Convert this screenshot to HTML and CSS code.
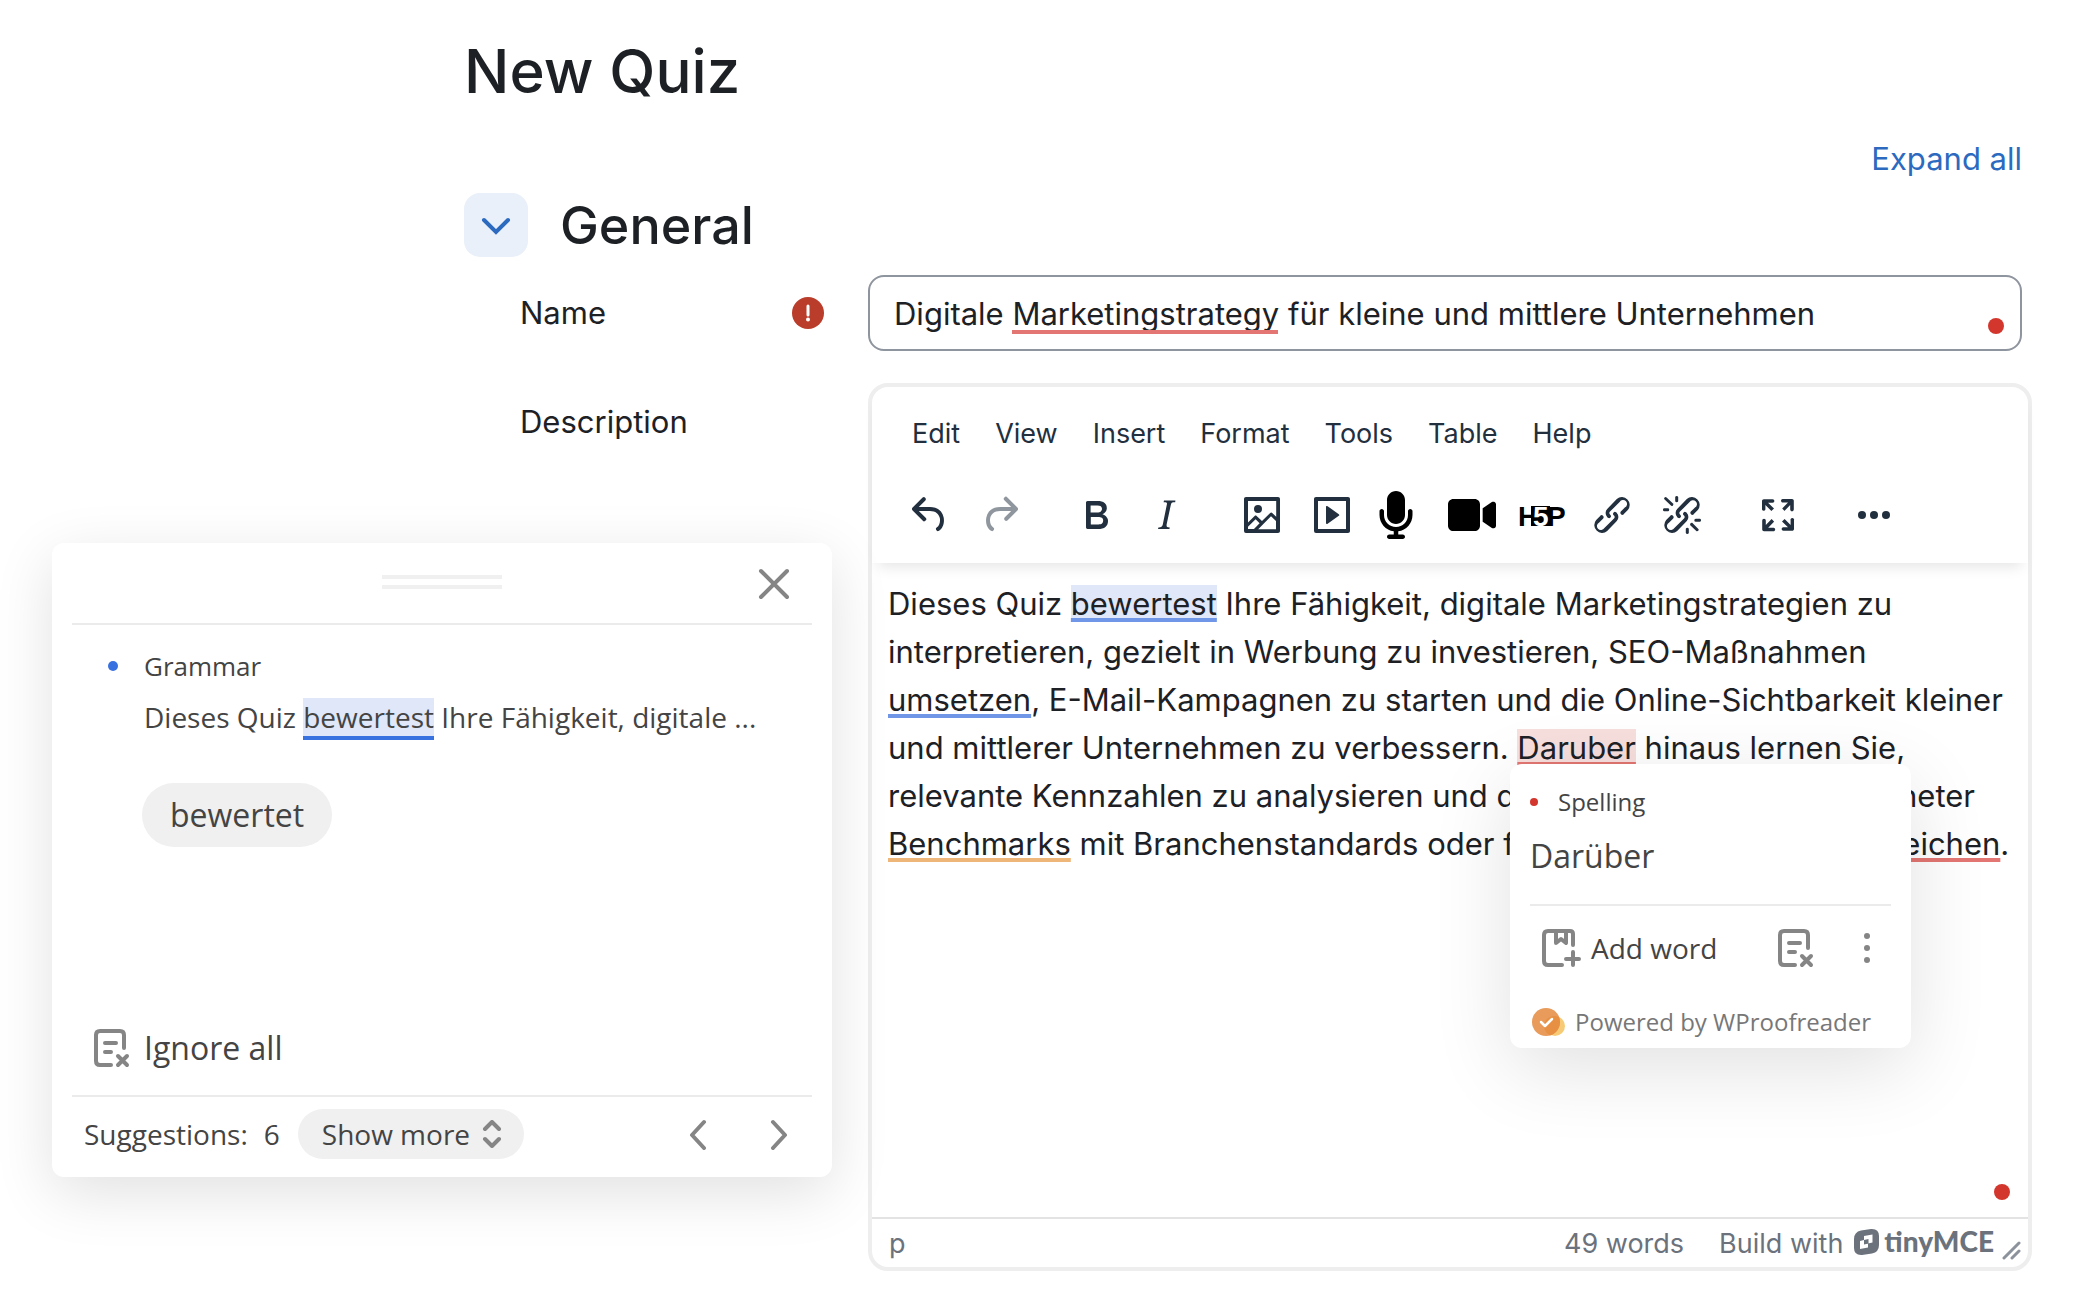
FILE: index.html
```html
<!DOCTYPE html>
<html lang="en">
<head>
	<meta charset="utf-8">
	<title>New Quiz</title>
	<link rel="stylesheet" href="styles.css">
</head>
<body>

<main class="quiz-form">
	<h1>New Quiz</h1>
	<div class="form-links"><a href="#">Expand all</a></div>
	<div class="section-head">
		<button class="toggle" aria-label="Collapse General">
			<svg width="32" height="32" viewBox="0 0 32 32"><path d="M4 11l12 12 12-12" /></svg>
		</button>
		<h2>General</h2>
	</div>

	<div class="form-row">
		<div class="form-label">
			<label for="quiz-name">Name</label>
			<svg width="32" height="32" viewBox="0 0 32 32"><circle cx="16" cy="16" r="16" fill="#ba3d2c" /><path d="M16 9v9" stroke="#fff" stroke-width="3" stroke-linecap="round" /><circle cx="16" cy="22.500" r="2" fill="#fff" /></svg>
		</div>
		<div class="name-field">
			<input id="quiz-name" type="text" spellcheck="false" value="Digitale Marketingstrategy für kleine und mittlere Unternehmen">
			<span class="name-mark"></span>
			<span class="badge"></span>
		</div>
	</div>

	<div class="form-row">
		<div class="form-label description-label">
			<label id="description-label">Description</label>
		</div>
		<div class="editor">
			<div class="editor-header">
				<div class="menubar">
					<button>Edit</button>
					<button>View</button>
					<button>Insert</button>
					<button>Format</button>
					<button>Tools</button>
					<button>Table</button>
					<button>Help</button>
				</div>
				<div class="toolbar">
					<div class="group">
						<button aria-label="Undo"><svg viewBox="0 0 24 24"><path d="M6.400 8H12c3.700 0 6.200 2 6.800 5.100.6 2.700-.4 5.600-2.300 6.800a1 1 0 0 1-1-1.800c1.100-.6 1.800-2.700 1.400-4.600-.5-2.100-2.100-3.500-4.900-3.500H6.400l3.300 3.300a1 1 0 1 1-1.400 1.400l-5-5a1 1 0 0 1 0-1.400l5-5a1 1 0 0 1 1.400 1.400L6.400 8Z" /></svg></button>
						<button aria-label="Redo" disabled><svg viewBox="0 0 24 24"><path d="M17.600 10H12c-2.800 0-4.400 1.400-4.900 3.500-.4 2 .3 4 1.400 4.600a1 1 0 1 1-1 1.800c-2-1.200-2.900-4.100-2.300-6.800.6-3 3-5.100 6.800-5.100h5.600l-3.300-3.300a1 1 0 1 1 1.400-1.400l5 5a1 1 0 0 1 0 1.400l-5 5a1 1 0 0 1-1.400-1.400l3.300-3.300Z" /></svg></button>
					</div>
					<div class="group">
						<button aria-label="Bold"><svg viewBox="0 0 24 24"><path fill-rule="evenodd" d="M7.800 19c-.3 0-.5 0-.6-.2l-.2-.5V5.700c0-.2 0-.4.2-.5l.6-.2h5c1.500 0 2.700.3 3.500 1 .7.6 1.100 1.400 1.100 2.500a3 3 0 0 1-.6 1.900c-.4.6-1 1-1.600 1.200.4.1.9.3 1.300.6s.8.7 1 1.200c.4.4.5 1 .5 1.600 0 1.300-.4 2.300-1.300 3-.8.7-2.100 1-3.800 1H7.800Zm5-8.300c.6 0 1.200-.1 1.600-.5.4-.3.6-.7.6-1.300 0-1.100-.8-1.700-2.300-1.700H9.300v3.500h3.400Zm.5 6c.7 0 1.300-.1 1.700-.4.4-.4.6-.9.6-1.500s-.2-1-.7-1.400c-.4-.3-1-.4-2-.4H9.400v3.800h4Z" /></svg></button>
						<button aria-label="Italic"><svg viewBox="0 0 24 24"><path d="m16.700 4.700-.1.900h-.3c-.6 0-1 0-1.400.3-.3.3-.4.6-.5 1.100l-2.100 9.800v.6c0 .5.4.8 1.400.8h.2l-.2.8H8l.2-.8h.2c1.100 0 1.800-.5 2-1.500l2-9.800.1-.5c0-.6-.4-.8-1.400-.8h-.3l.2-.9h5.800Z" /></svg></button>
					</div>
					<div class="group">
						<button aria-label="Image"><svg viewBox="0 0 24 24"><path fill-rule="evenodd" d="m5 15.700 3.300-3.200c.3-.3.7-.3 1 0L12 15l4.100-4c.3-.4.8-.4 1 0l2 1.900V5H5v10.700ZM5 18V19h3l2.800-2.900-2-2L5 17.900Zm14-3-2.500-2.400-6.400 6.500H19v-4ZM4 3h16c.6 0 1 .4 1 1v16c0 .6-.4 1-1 1H4a1 1 0 0 1-1-1V4c0-.6.4-1 1-1Zm6 8a2 2 0 1 0 0-4 2 2 0 0 0 0 4Z" /></svg></button>
						<button aria-label="Multimedia"><svg viewBox="0 0 24 24"><path fill-rule="evenodd" d="M4 3h16c.6 0 1 .4 1 1v16c0 .6-.4 1-1 1H4a1 1 0 0 1-1-1V4c0-.6.4-1 1-1Zm1 2v14h14V5H5Zm4.800 2.600 5.600 4a.5.5 0 0 1 0 .8l-5.600 4A.5.5 0 0 1 9 16V8a.5.5 0 0 1 .8-.4Z" /></svg></button>
						<button aria-label="Record audio"><svg class="solid" viewBox="0 0 512 512"><path d="M192 0C139 0 96 43 96 96V256c0 53 43 96 96 96s96-43 96-96V96c0-53-43-96-96-96zM64 216c0-13.300-10.700-24-24-24s-24 10.700-24 24v40c0 89.100 66.200 162.700 152 174.400V464H120c-13.300 0-24 10.700-24 24s10.700 24 24 24h72 72c13.300 0 24-10.700 24-24s-10.700-24-24-24H216V430.400c85.800-11.700 152-85.300 152-174.400V216c0-13.300-10.700-24-24-24s-24 10.700-24 24v40c0 70.700-57.300 128-128 128s-128-57.300-128-128V216z" /></svg></button>
						<button aria-label="Record video"><svg class="solid" viewBox="0 0 576 512"><path d="M0 128C0 92.700 28.700 64 64 64H320c35.300 0 64 28.700 64 64V384c0 35.300-28.700 64-64 64H64c-35.300 0-64-28.700-64-64V128zM559.100 99.800c10.400 5.600 16.900 16.400 16.900 28.200V384c0 11.800-6.500 22.600-16.900 28.200s-23 5-32.900-1.600l-96-64L416 337.100V320 192 174.900l14.200-9.500 96-64c9.800-6.500 22.400-7.200 32.900-1.600z" /></svg></button>
						<button aria-label="Insert H5P"><svg class="solid h5p" viewBox="0 0 48 48"><path d="M13 15h19v20H13z" /><text y="35"><tspan x="0">H</tspan><tspan class="five" x="15">5</tspan><tspan x="29">P</tspan></text></svg></button>
						<button aria-label="Link"><svg viewBox="0 0 24 24"><path d="M6.200 12.300a1 1 0 0 1 1.400 1.400l-2 2a2 2 0 1 0 2.600 2.800l4.800-4.800a1 1 0 0 0 0-1.400 1 1 0 1 1 1.400-1.300 2.900 2.900 0 0 1 0 4L9.600 20a3.900 3.900 0 0 1-5.500-5.500l2-2Zm11.600-.6a1 1 0 0 1-1.400-1.400l2-2a2 2 0 1 0-2.600-2.800L11 10.300a1 1 0 0 0 0 1.400A1 1 0 1 1 9.600 13a2.900 2.900 0 0 1 0-4L14.400 4a3.900 3.900 0 0 1 5.500 5.500l-2 2Z" /></svg></button>
						<button aria-label="Unlink"><svg viewBox="0 0 24 24"><path d="M6.200 12.300a1 1 0 0 1 1.400 1.400l-2 2a2 2 0 1 0 2.600 2.800l4.800-4.800a1 1 0 0 0 0-1.400 1 1 0 1 1 1.400-1.300 2.900 2.900 0 0 1 0 4L9.600 20a3.900 3.900 0 0 1-5.500-5.500l2-2Zm11.600-.6a1 1 0 0 1-1.400-1.400l2.100-2a2 2 0 1 0-2.700-2.800L11 10.300a1 1 0 0 0 0 1.400A1 1 0 1 1 9.600 13a2.900 2.900 0 0 1 0-4L14.400 4a3.900 3.900 0 0 1 5.500 5.500l-2 2ZM7.600 6.300a.8.8 0 0 1-1 1.100L3.300 4.200a.7.7 0 1 1 1-1l3.200 3.100ZM5.100 8.600a.8.8 0 0 1 0 1.500H3a.8.8 0 0 1 0-1.500H5Zm5-3.500a.8.8 0 0 1-1.500 0V3a.8.8 0 0 1 1.500 0V5Zm6 11.800a.8.8 0 0 1 1-1l3.200 3.200a.8.8 0 0 1-1 1L16 17Zm-2.200 2a.8.8 0 0 1 1.500 0V21a.8.8 0 0 1-1.500 0V19Zm5-3.500a.7.7 0 1 1 0-1.500H21a.8.8 0 0 1 0 1.500H19Z" /></svg></button>
					</div>
					<div class="group">
						<button aria-label="Fullscreen"><svg viewBox="0 0 24 24"><path d="m15.300 10-1.200-1.300 2.900-3h-2.300a.9.9 0 1 1 0-1.700H19c.5 0 .9.4.9.9v4.400a.9.9 0 1 1-1.800 0V7l-2.900 3Zm0 4 3 3v-2.300a.9.9 0 1 1 1.700 0V19c0 .5-.4.9-.9.9h-4.400a.9.9 0 1 1 0-1.800H17l-3-2.900 1.300-1.200ZM10 15.400l-2.900 3h2.300a.9.9 0 1 1 0 1.700H5a.9.9 0 0 1-.9-.9v-4.400a.9.9 0 1 1 1.800 0V17l2.900-3 1.200 1.300ZM8.700 10 5.700 7v2.300a.9.9 0 0 1-1.700 0V5c0-.5.4-.9.9-.9h4.400a.9.9 0 0 1 0 1.800H7l3 2.900-1.300 1.200Z" /></svg></button>
					</div>
					<div class="group">
						<button aria-label="More"><svg viewBox="0 0 24 24"><circle cx="6" cy="12" r="2" /><circle cx="12" cy="12" r="2" /><circle cx="18" cy="12" r="2" /></svg></button>
					</div>
				</div>
			</div>
			<div class="editor-body" role="textbox" aria-multiline="true" aria-labelledby="description-label">
				<p>Dieses Quiz <span class="grammar active">bewertest</span> Ihre Fähigkeit, digitale Marketingstrategien zu<br>
				interpretieren, gezielt in Werbung zu investieren, SEO-Maßnahmen<br>
				<span class="grammar">umsetzen</span>, E-Mail-Kampagnen zu starten und die Online-Sichtbarkeit kleiner<br>
				und mittlerer Unternehmen zu verbessern. <span class="spelling active">Daruber</span> hinaus lernen Sie,<br>
				relevante Kennzahlen zu analysieren und di<span class="covered"></span>neter<br>
				<span class="style">Benchmarks</span> mit Branchenstandards oder fr<span class="covered"></span><span class="spelling">eichen</span>.</p>

				<div class="popup">
					<div class="popup-type"><span class="dot"></span>Spelling</div>
					<button class="popup-word">Darüber</button>
					<div class="popup-actions">
						<button class="add-word">
							<svg width="40" height="40" viewBox="0 0 40 40"><path d="M32 17V6q0-3-3-3H7Q3 3 3 7v26q0 4 4 4h14M15 4v11l5-4 5 4V4M32 24v13M25 31h13" /></svg>
							Add word
						</button>
						<button aria-label="Ignore">
							<svg width="40" height="40" viewBox="0 0 40 40"><path d="M32 20V7q0-4-4-4H8Q4 3 4 7v26q0 4 4 4h11M13 15h11M13 24h6M26 28l9 9M35 28l-9 9" /></svg>
						</button>
						<button aria-label="More actions">
							<svg width="8" height="40" viewBox="0 0 8 40"><g class="fill"><circle cx="4" cy="8" r="3" /><circle cx="4" cy="20" r="3" /><circle cx="4" cy="32" r="3" /></g></svg>
						</button>
					</div>
					<div class="powered">
						<svg width="34" height="28" viewBox="0 0 34 28"><circle cx="23" cy="18" r="10" fill="#f7cb76" /><circle cx="14" cy="14" r="14" fill="#e89b5a" /><path d="M27 9a14 14 0 0 1-9 18.500A10 10 0 0 1 27 9z" fill="#e78f42" /><path d="M9 14l4 4 7-7" fill="none" stroke="#fff" stroke-width="2.500" class="check" /></svg>
						Powered by WProofreader
					</div>
				</div>
				<span class="badge"></span>
			</div>
			<div class="statusbar">
				<span>p</span>
				<span class="words">49 words</span>
				<a class="branding" href="#">Build with
					<svg width="28" height="28" viewBox="0 0 28 28"><path fill-rule="evenodd" d="M9 2.500L19 1q8-.5 8 7v9q0 7-7 8.500L10 27q-8 .5-8-7v-9q0-7 7-8.500zM12 8v4l-4 1v8l8-1.500v-4l4.500-1V6.500zM12 12l4.500-1v4.500l-4.500 1z" /></svg>
					<b>tinyMCE</b>
				</a>
				<svg class="resize" width="20" height="20" viewBox="0 0 20 20"><path d="M2 17L17 2M10 17l7-7" /></svg>
			</div>
		</div>
	</div>
</main>

<section class="proofreader" aria-label="Proofreader">
	<div class="proofreader-head">
		<div class="handle"></div>
		<button aria-label="Close">
			<svg width="32" height="32" viewBox="0 0 32 32"><path d="M3 3l26 26M29 3L3 29" /></svg>
		</button>
	</div>
	<div class="proofreader-body">
		<div class="issue-type"><span class="dot"></span>Grammar</div>
		<div class="issue-text">Dieses Quiz <span>bewertest</span> Ihre Fähigkeit, digitale ...</div>
		<button class="suggestion">bewertet</button>
		<button class="ignore">
			<svg width="40" height="40" viewBox="0 0 40 40"><path d="M32 20V7q0-4-4-4H8Q4 3 4 7v26q0 4 4 4h11M13 15h11M13 24h6M26 28l9 9M35 28l-9 9" /></svg>
			Ignore all
		</button>
	</div>
	<div class="proofreader-foot">
		<span>Suggestions:</span>
		<span class="count">6</span>
		<button class="show-more">Show more
			<svg width="20" height="28" viewBox="0 0 20 28"><path d="M3 9l7-7 7 7M3 19l7 7 7-7" /></svg>
		</button>
		<button class="prev" aria-label="Previous"><svg width="20" height="32" viewBox="0 0 20 32"><path d="M16 4L4 17l12 13" /></svg></button>
		<button aria-label="Next"><svg width="20" height="32" viewBox="0 0 20 32"><path d="M3 4l12 13L3 30" /></svg></button>
	</div>
</section>

</body>
</html>
```
FILE: styles.css
```css
* {
	box-sizing: border-box;
}
body {
	margin: 0;
	background: white;
	color: #1d2125;
	font: 31px/48px Inter, "Liberation Sans", sans-serif;
}
button {
	padding: 0;
	border: none;
	background: none;
	color: inherit;
	font: inherit;
	cursor: pointer;
}
button svg {
	display: block;
	flex: none;
}
a {
	color: #2c6ac0;
	text-decoration: none;
}

/* form */
.quiz-form {
	padding: 30px 66px 30px 464px;
}
h1 {
	margin: 0;
	font-size: 60px;
	line-height: 82px;
	font-weight: 500;
}
h2 {
	margin: 0;
	font-size: 52px;
	line-height: 66px;
	font-weight: 500;
}
.form-links {
	margin: 23px 10px 10px 0;
	text-align: right;
}
.section-head {
	display: flex;
	gap: 32px;
	margin-bottom: 16px;
}
.toggle {
	width: 64px;
	height: 64px;
	padding: 16px;
	border-radius: 16px;
	background: #e9f0f9;
}
.toggle path {
	fill: none;
	stroke: #2c6ac0;
	stroke-width: 4;
	stroke-linecap: round;
}
.form-row {
	display: flex;
	margin-bottom: 32px;
}
.form-label {
	display: flex;
	align-items: center;
	justify-content: space-between;
	flex: none;
	width: 404px;
	padding: 0 44px 0 56px;
}
.description-label {
	align-self: flex-start;
	padding-top: 15px;
}
.name-field {
	position: relative;
	flex: 1;
	margin-right: 10px;
}
.name-field input {
	display: block;
	width: 100%;
	height: 76px;
	padding: 0 24px;
	border: 2px solid #8f959e;
	border-radius: 16px;
	background: white;
	color: inherit;
	font: inherit;
}
.name-mark {
	position: absolute;
	left: 144px;
	top: 55px;
	width: 266px;
	height: 4px;
	background: #e37672;
}
.badge {
	position: absolute;
	right: 18px;
	bottom: 17px;
	width: 16px;
	height: 16px;
	border-radius: 50%;
	background: #d3362d;
}

/* editor */
.editor {
	flex: 1;
	min-width: 0;
	border: 4px solid #eee;
	border-radius: 20px;
}
.editor-header {
	height: 176px;
	border-radius: 16px 16px 0 0;
	box-shadow: 0 10px 14px -6px rgba(0, 0, 0, .1);
	color: #222f3e;
}
.menubar {
	display: flex;
	gap: 35px;
	padding: 23px 40px 0;
	font-size: 27px;
}
.toolbar {
	display: flex;
	gap: 26px;
	padding: 19px 23px 0;
}
.group {
	display: flex;
}
.toolbar button {
	width: 70px;
	height: 76px;
	padding: 0 11px;
}
.toolbar svg {
	width: 48px;
	height: 48px;
	fill: #222f3e;
}
.toolbar svg.solid {
	fill: black;
}
.toolbar button:disabled {
	opacity: .5;
}
.h5p text {
	font: bold 28px "Liberation Sans", sans-serif;
}
.h5p .five {
	fill: white;
}
.editor-body {
	position: relative;
	height: 654px;
	padding: 17px 16px;
}
.editor-body p {
	margin: 0;
	white-space: nowrap;
}
.grammar,
.spelling,
.style {
	text-decoration: underline 4px #7096e8;
	text-decoration-skip-ink: none;
	text-underline-offset: 3px;
}
.spelling {
	text-decoration-color: #e37672;
}
.style {
	text-decoration-color: #eeb678;
}
.grammar.active {
	background: #dfe7f9;
}
.spelling.active {
	background: #f7dfde;
}
/* stretch of a line that lies under the popup */
.covered {
	display: inline-block;
	width: 376px;
}
.statusbar {
	display: flex;
	height: 50px;
	padding: 0 6px 0 17px;
	border-top: 2px solid #e3e3e3;
	color: #6b727c;
	font-size: 27px;
	line-height: 50px;
}
.words {
	margin-left: auto;
}
.branding {
	display: flex;
	margin-left: 35px;
	color: inherit;
}
.branding svg {
	margin: 9px 4px 0 9px;
	fill: #6b727c;
}
.branding b {
	font: 900 28px/44px Lato, sans-serif;
}
.resize {
	align-self: flex-end;
	margin: 0 0 6px 8px;
	fill: none;
	stroke: #8c929b;
	stroke-width: 3;
	stroke-linecap: round;
}

/* word popup */
.popup,
.proofreader {
	position: absolute;
	background: white;
	color: #444;
	font-family: "Open Sans", sans-serif;
}
.popup svg,
.proofreader svg {
	fill: none;
	stroke: #858585;
	stroke-width: 4;
	stroke-linecap: round;
	stroke-linejoin: round;
}
.popup .fill {
	fill: #858585;
	stroke: none;
}
.popup {
	right: 117px;
	top: 201px;
	width: 401px;
	height: 284px;
	padding: 20px;
	border-radius: 12px;
	box-shadow: 0 20px 80px rgba(0, 0, 0, .12);
}
.popup-type {
	display: flex;
	align-items: center;
	gap: 20px;
	font-size: 24px;
	line-height: 36px;
}
.dot {
	width: 8px;
	height: 8px;
	border-radius: 50%;
	background: #d3362d;
}
.popup-word {
	display: block;
	width: 100%;
	height: 86px;
	padding-bottom: 12px;
	border-bottom: 2px solid #ebebeb;
	font-size: 32px;
	line-height: 56px;
	text-align: left;
}
.popup-actions {
	display: flex;
	align-items: center;
	justify-content: space-between;
	height: 84px;
	padding: 0 20px 0 11px;
	font-size: 28px;
}
.add-word {
	display: flex;
	align-items: center;
	gap: 10px;
	margin-right: 12px;
}
.powered {
	display: flex;
	align-items: center;
	gap: 9px;
	padding: 14px 0 0 2px;
	color: #777;
	font-size: 24px;
	line-height: 36px;
}
.popup .powered svg {
	stroke: none;
}

/* proofreader dialog */
.proofreader {
	left: 52px;
	top: 543px;
	width: 780px;
	padding: 0 20px;
	border-radius: 12px;
	box-shadow: 0 16px 60px rgba(0, 0, 0, .12);
	font-size: 28px;
}
.proofreader-head {
	display: flex;
	align-items: flex-start;
	justify-content: flex-end;
	height: 82px;
	padding: 25px 22px 0 0;
	border-bottom: 2px solid #ebebeb;
}
.handle {
	width: 120px;
	height: 14px;
	margin: 7px 256px 0 0;
	border: solid #f0f0f0;
	border-width: 4px 0;
}
.proofreader-body {
	height: 472px;
	padding: 17px 15px 0;
	border-bottom: 2px solid #ebebeb;
}
.issue-type {
	display: flex;
	align-items: center;
	gap: 26px;
	padding-left: 21px;
	font-size: 26px;
}
.issue-type .dot {
	width: 10px;
	height: 10px;
	background: #3871e0;
}
.issue-text {
	padding: 3px 0 0 57px;
}
.issue-text span {
	border-bottom: 4px solid #3871e0;
	background: #dfe7f9;
}
.suggestion {
	display: block;
	height: 64px;
	margin: 42px 0 0 55px;
	padding: 0 28px;
	border-radius: 32px;
	background: #f0f0f0;
	font-size: 32px;
}
.ignore {
	display: flex;
	align-items: center;
	gap: 12px;
	margin-top: 177px;
	padding-left: 5px;
	font-size: 32px;
}
.proofreader-foot {
	display: flex;
	align-items: center;
	height: 80px;
	padding: 0 22px 6px 12px;
}
.count {
	margin: 0 18px 0 16px;
}
.show-more {
	display: flex;
	align-items: center;
	gap: 12px;
	height: 50px;
	padding: 0 22px 0 24px;
	border-radius: 25px;
	background: #f0f0f0;
}
.prev {
	margin: 0 62px 0 auto;
}
```
